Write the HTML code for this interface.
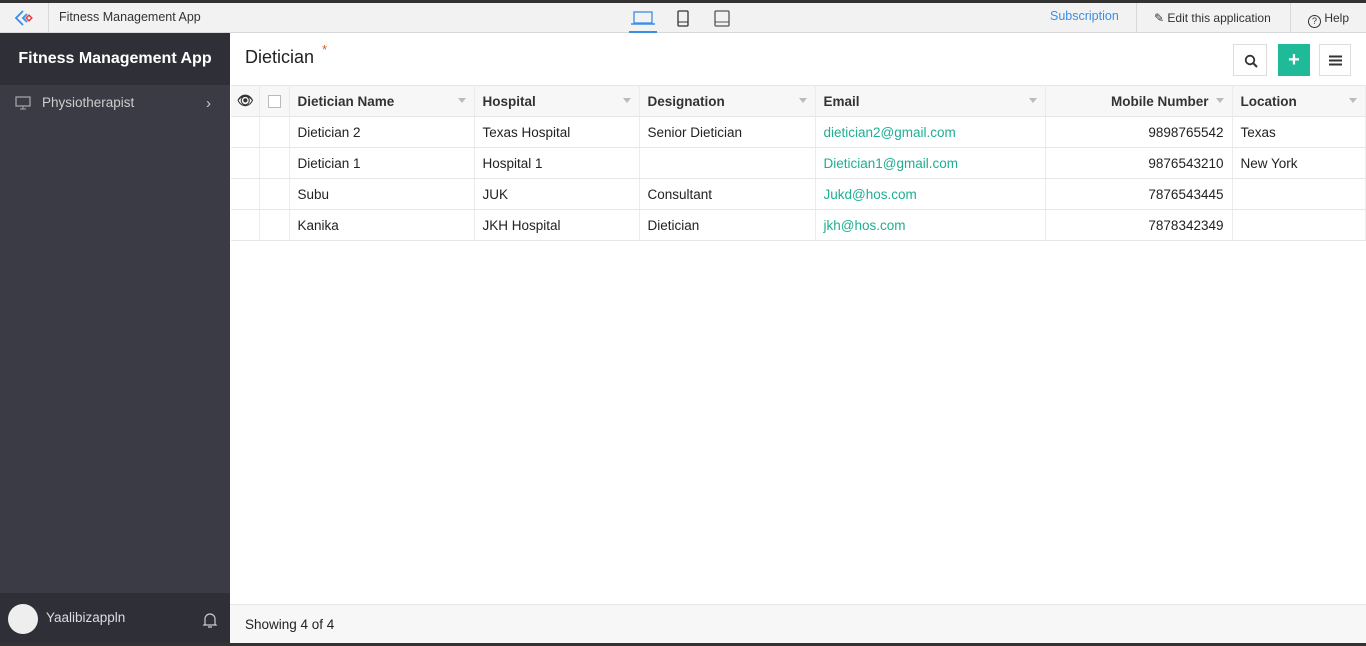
<!DOCTYPE html>
<html><head><style>
*{box-sizing:border-box;margin:0;padding:0}
body{width:1366px;height:646px;overflow:hidden;font-family:"Liberation Sans",sans-serif;background:#fff;position:relative;color:#222}
.abs{position:absolute}
#top{left:0;top:0;width:1366px;height:3px;background:#333}
#bar{left:0;top:3px;width:1366px;height:30px;background:#f2f2f2;border-bottom:1px solid #d8d8d8;font-size:12.5px}
#side{left:0;top:33px;width:230px;height:610px;background:#3a3b45}
#sidehd{left:0;top:33px;width:230px;height:52px;background:#2e2f37;color:#fff;font-size:16px;font-weight:bold;text-align:center;line-height:52px}
#sidefoot{left:0;top:593px;width:230px;height:50px;background:#2e2f37}
table{border-collapse:collapse;font-size:13.5px;table-layout:fixed}
td,th{height:31px;border-bottom:1px solid #e6e6e6;border-right:1px solid #ececec;padding:0 8px;text-align:left;white-space:nowrap;overflow:hidden}
th{background:#f7f7f7;font-weight:bold;color:#333;position:relative;height:31px}
th .c{position:absolute;right:8px;top:12px;width:0;height:0;border-left:4px solid transparent;border-right:4px solid transparent;border-top:5px solid #bbb}
.em{color:#1fae93}
.r{text-align:right}
</style></head><body>
<div id="top" class="abs"></div>
<div id="bar" class="abs">
 <svg class="abs" style="left:14px;top:6px" width="22" height="18" viewBox="0 0 22 18"><path d="M9 2 L2 9 L9 16 M13 5 L9 9 L13 13" fill="none" stroke="#3a8ee6" stroke-width="1.8"/><rect x="13" y="7" width="4" height="4" transform="rotate(45 15 9)" fill="none" stroke="#e0443c" stroke-width="1.5"/></svg>
 <div class="abs" style="left:48px;top:0;width:1px;height:30px;background:#d8d8d8"></div>
 <div class="abs" style="left:59px;top:7px;color:#333">Fitness Management App</div>
 <svg class="abs" style="left:630px;top:7px" width="26" height="16"><rect x="4" y="2" width="18" height="11" fill="none" stroke="#3a8ee6" stroke-width="1.3"/><path d="M1 14 H25" stroke="#3a8ee6" stroke-width="1.5"/></svg>
 <div class="abs" style="left:629px;top:28px;width:28px;height:2px;background:#3a8ee6"></div>
 <svg class="abs" style="left:677px;top:7px" width="12" height="17"><rect x="1" y="1" width="10" height="15" rx="1" fill="none" stroke="#333" stroke-width="1.3"/><path d="M1 12 H11" stroke="#333"/></svg>
 <svg class="abs" style="left:714px;top:7px" width="16" height="17"><rect x="1" y="1" width="14" height="15" rx="1" fill="none" stroke="#555" stroke-width="1.3"/><path d="M1 12 H15" stroke="#555"/></svg>
 <div class="abs" style="left:1050px;top:6px;color:#3a8ee6">Subscription</div>
 <div class="abs" style="left:1136px;top:0;width:1px;height:30px;background:#d8d8d8"></div>
 <div class="abs" style="left:1154px;top:8px;color:#333;font-size:12px">✎ Edit this application</div>
 <div class="abs" style="left:1290px;top:0;width:1px;height:30px;background:#d8d8d8"></div>
 <div class="abs" style="left:1308px;top:8px;color:#333;font-size:12px"><span style="display:inline-block;width:13px;height:13px;border:1.3px solid #333;border-radius:50%;font-size:9px;text-align:center;line-height:11px;vertical-align:-2px">?</span> Help</div>
</div>
<div id="side" class="abs"></div>
<div id="sidehd" class="abs">Fitness Management App</div>
<svg class="abs" style="left:15px;top:96px" width="16" height="14"><rect x="1" y="1" width="14" height="9" fill="none" stroke="#aaa" stroke-width="1.2"/><path d="M5 13 H11 M8 10 V13" stroke="#aaa"/></svg>
<div class="abs" style="left:42px;top:95px;color:#ccc;font-size:13.5px">Physiotherapist</div>
<div class="abs" style="left:206px;top:95px;color:#ccc;font-size:15px">›</div>
<div id="sidefoot" class="abs"></div>
<div class="abs" style="left:8px;top:604px;width:30px;height:30px;border-radius:50%;background:#eee"></div>
<div class="abs" style="left:46px;top:610px;color:#ddd;font-size:13.5px">Yaalibizappln</div>
<svg class="abs" style="left:202px;top:611px" width="16" height="18"><path d="M3 13 V8 a5 5 0 0 1 10 0 V13 L14 14 H2 Z M6 16 H10" fill="none" stroke="#ccc" stroke-width="1.2"/></svg>
<div class="abs" style="left:245px;top:47px;font-size:18px;color:#222">Dietician</div>
<div class="abs" style="left:322px;top:42px;font-size:13px;color:#e05a1a">*</div>
<div class="abs" style="left:1233px;top:44px;width:34px;height:32px;border:1px solid #ddd;background:#fff"><svg style="margin:9px 0 0 10px" width="14" height="14"><circle cx="6" cy="6" r="4.3" fill="none" stroke="#333" stroke-width="1.8"/><path d="M9 9 L13 13" stroke="#333" stroke-width="2"/></svg></div>
<div class="abs" style="left:1278px;top:44px;width:32px;height:32px;background:#1fba98;color:#fff;font-weight:bold;font-size:20px;text-align:center;line-height:32px">+</div>
<div class="abs" style="left:1319px;top:44px;width:32px;height:32px;border:1px solid #ddd"><svg style="margin:10px 0 0 9px" width="14" height="12"><path d="M0 1.5H13M0 5.5H13M0 9.5H13" stroke="#333" stroke-width="2"/></svg></div>
<table class="abs" style="left:231px;top:85px;width:1135px;border-top:1px solid #e6e6e6">
<colgroup><col style="width:28px"><col style="width:30px"><col style="width:185px"><col style="width:165px"><col style="width:176px"><col style="width:230px"><col style="width:187px"><col></colgroup>
<tr><th style="padding:0 6px">👁</th><th style="padding:0 8px"><span style="display:inline-block;width:13px;height:13px;border:1px solid #bbb;background:#fff;vertical-align:middle"></span></th>
<th>Dietician Name<span class="c"></span></th><th>Hospital<span class="c"></span></th><th>Designation<span class="c"></span></th><th>Email<span class="c"></span></th><th style="padding-right:23px" class="r">Mobile Number<span class="c"></span></th><th>Location<span class="c"></span></th></tr>
<tr><td></td><td></td><td>Dietician 2</td><td>Texas Hospital</td><td>Senior Dietician</td><td class="em">dietician2@gmail.com</td><td class="r">9898765542</td><td>Texas</td></tr>
<tr><td></td><td></td><td>Dietician 1</td><td>Hospital 1</td><td></td><td class="em">Dietician1@gmail.com</td><td class="r">9876543210</td><td>New York</td></tr>
<tr><td></td><td></td><td>Subu</td><td>JUK</td><td>Consultant</td><td class="em">Jukd@hos.com</td><td class="r">7876543445</td><td></td></tr>
<tr><td></td><td></td><td>Kanika</td><td>JKH Hospital</td><td>Dietician</td><td class="em">jkh@hos.com</td><td class="r">7878342349</td><td></td></tr>
</table>
<div class="abs" style="left:230px;top:604px;width:1136px;height:39px;background:#f7f7f7;border-top:1px solid #e6e6e6"></div>
<div class="abs" style="left:245px;top:617px;font-size:13.5px;color:#222">Showing 4 of 4</div>
<div class="abs" style="left:0;top:643px;width:1366px;height:3px;background:#333"></div>
</body></html>
